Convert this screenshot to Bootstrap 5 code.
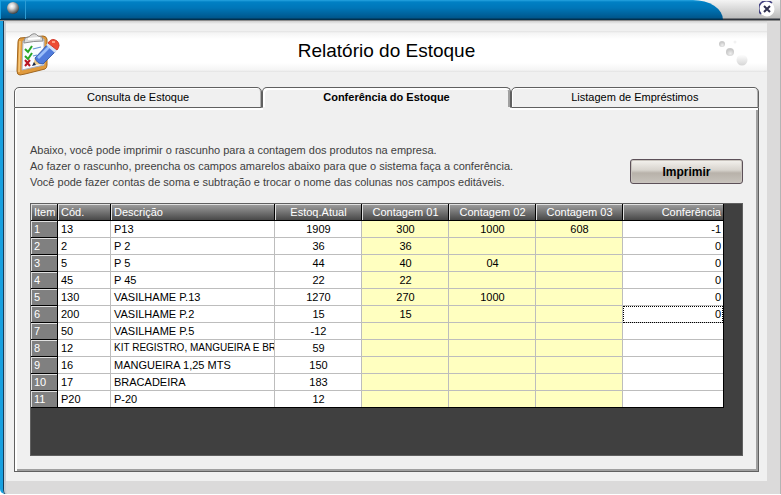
<!DOCTYPE html>
<html lang="pt-BR">
<head>
<meta charset="utf-8">
<meta name="viewport" content="width=device-width, initial-scale=1">
<title>Relatório do Estoque</title>
<link href="https://cdn.jsdelivr.net/npm/bootstrap@5.3.0/dist/css/bootstrap.min.css" rel="stylesheet">
<style>
body{font-family:"Liberation Sans",Arial,sans-serif;font-size:11px;line-height:16px;color:#000;background:#fff}
.app-window{min-height:493px;background:#dbdada;border-left:3px solid #18a0e0;border-right:1px solid #b4b4b4;border-bottom-left-radius:5px;box-shadow:inset 1px 0 #143c58,inset 3px 0 #c8ccd2}
.title-bar{height:21px;margin-left:-3px;background:linear-gradient(#f4f4f4,#bcbcbc 18px,#30343c 19px,#30343c 20px,#8c8c8c 20px)}
.title-fill{height:20px;margin-right:57px;background:linear-gradient(#27a4e0,#0080c4 2px,#0076b8 8px,#00568c 18px,#02304e 19px);border-top-right-radius:30px 20px}
.orb-cell{width:26px;height:19px;border-right:1px solid #2c9cd4;border-left:1px solid #18a0e0}
.close-btn{width:16px;height:16px;right:5px;top:1px}
.work-area{margin:0 13px 13px 3px;padding-top:10px;background:linear-gradient(#cfcfcf,#f0f0f0 3px)}
.banner{height:41px;background:linear-gradient(#e2e2e2,#f4f4f4 2px,#fff 8px,#fff 32px,#f4f4f4 39px,#e2e2e2)}
.banner h1{font-size:19px;line-height:40px;font-weight:400}
.banner-icon{left:10px;top:2px;width:44px;height:44px}
.banner-dots{right:17px;top:8px;width:32px;height:28px}
.tab-zone{padding:15px 8px 9px}
.report-tabs{display:grid;grid-template-columns:1fr 1fr 1fr;--bs-nav-tabs-border-width:0px;padding:0}
.report-tabs .nav-link{font-size:11px;line-height:19px;padding:0;margin:0;color:#000;background:#f0f0f0;border:1px solid #606060;border-radius:5px 5px 0 0;box-shadow:inset 1px 1px #fff,inset -1px 0 #b0b0b0}
.report-tabs .nav-link.active{font-weight:700;color:#000;background:#f0f0f0;border-color:#606060;border-bottom-color:#f0f0f0;box-shadow:inset 2px 2px #fff,inset -2px 0 #a0a0a0}
.tab-page{min-height:362px;border:1px solid #606060;border-top:0;box-shadow:inset 2px 0 #fff,inset -2px -2px #a0a0a0;padding:32px 15px 15px;background:#f0f0f0}
.tab-rule{display:grid;grid-template-columns:1fr 1fr 1fr;border:solid #606060;border-width:0 1px;background:#f0f0f0}
.tab-rule span{height:2px;background:#fff}
.tab-rule span:nth-child(2){visibility:hidden}
.intro{color:#404040}
.print-btn{width:113px;height:25px;padding:0;margin-top:17px;font-size:12px;line-height:22px;font-weight:700;color:#000;border:1px solid #5c5058;border-radius:3px;background:linear-gradient(#f4f2ee,#d8d4ce 10px,#b8b2aa 13px,#c8c3bc);box-shadow:inset 0 0 0 1px #c9c4be}
.grid-box{margin-top:13px;min-height:253px;background:#404040;border:1px solid #606060;padding-right:18px}
.stock-grid{table-layout:fixed;width:100%;border-collapse:separate;border-spacing:0;border-right:1px solid #000;border-bottom:1px solid #000;margin:0}
.stock-grid th,.stock-grid td{height:17px;line-height:16px;padding:0 2px 0 3px;white-space:nowrap;overflow:hidden;background:#fff;border-right:1px solid #bdbdbd;border-bottom:1px solid #bdbdbd}
.stock-grid thead th{color:#fff;font-weight:400;background:linear-gradient(#a0a0a0,#484848);border-color:#000;box-shadow:inset 1px 1px #e0e0e0}
.stock-grid tbody th{color:#fff;font-weight:400;background:#808080;border-color:#000;box-shadow:inset 1px 1px #e0e0e0}
.stock-grid td.count{background:#ffffc0}
.stock-grid td.long-name{font-size:10px;padding-right:0}
.stock-grid tr>:last-child{border-right:0}
.stock-grid tbody tr:last-child>*{border-bottom:0;height:16px}
.stock-grid td.focus-cell{outline:1px dotted #000;outline-offset:-1px}
.c-item{width:27px}.c-code{width:53px}.c-num{width:87px}.c-conf{width:100px}
</style>
<script src="https://cdn.jsdelivr.net/npm/bootstrap@5.3.0/dist/js/bootstrap.bundle.min.js"></script>
</head>
<body>
<div class="app-window d-flex flex-column">
  <header class="title-bar position-relative">
    <div class="title-fill">
      <div class="orb-cell d-flex">
        <svg width="24" height="18" viewBox="0 0 24 18" aria-hidden="true"><defs><radialGradient id="orb" cx=".4" cy=".35" r=".65"><stop offset="0" stop-color="#fff"/><stop offset=".35" stop-color="#d8d8d8"/><stop offset="1" stop-color="#444"/></radialGradient></defs><circle cx="12" cy="8" r="6" fill="url(#orb)"/></svg>
      </div>
    </div>
    <button type="button" class="close-btn btn p-0 border-0 position-absolute d-flex" aria-label="Fechar">
      <svg width="16" height="16" viewBox="0 0 16 16"><circle cx="8" cy="8" r="7.5" fill="#fff"/><path d="M2 13A7 7 0 0 1 13 2" fill="none" stroke="#414080" stroke-width="1.6"/><path d="M5 5l6 6M11 5l-6 6" stroke="#303050" stroke-width="2"/></svg>
    </button>
  </header>

  <main class="work-area flex-grow-1">
    <div class="banner position-relative">
      <svg class="banner-icon position-absolute" viewBox="0 0 44 44" aria-hidden="true">
        <path d="M4 5Q2 6 2 9L1 38Q1 42 4 42L9 41L29 36Q31 35 31 32L31 6Q30 3 27 3Z" fill="#e09a3c" stroke="#a0661f"/>
        <path d="M4 8L3 39" stroke="#f8c97c" stroke-width="1.6"/>
        <path d="M7 8L28 6L28 32L6 37Z" fill="#fafcff" stroke="#a7b3c8"/>
        <path d="M8 9L9 5Q14 4 15 2Q19-1 22 3L26 4L27 8Q18 8 8 10Z" fill="#ddd" stroke="#8c8c8c"/>
        <path d="M12 6L24 5" stroke="#fff" stroke-width="2"/>
        <path d="M9 16l3 3 4-6M9 23l3 3 4-6" fill="none" stroke="#28a526" stroke-width="2"/>
        <path d="M9 27l5 6M14 27l-5 6" stroke="#b81724" stroke-width="2"/>
        <path d="M17 16L25 14M17 23l4-1" stroke="#6295d7" stroke-width="1.2"/>
        <path d="M19 25L17 32L27 31Z" fill="#edcb8b"/><path d="M18 29l-2 4 4-1z" fill="#172747"/>
        <path d="M19 25L32 11L40 18L27 31Q21 31 19 25Z" fill="#4f7bdc" stroke="#294f9e" stroke-width=".8"/>
        <path d="M22 25L33 14" stroke="#99bdf9" stroke-width="2.6"/>
        <path d="M30 12l2-2 9 7-2 3z" fill="#d3e2f7"/>
        <path d="M32 10Q36 4 41 8Q45 12 41 17Z" fill="#ee4c35" stroke="#d23a2c"/><path d="M36 9l3 0" stroke="#ff9e84" stroke-width="2"/>
      </svg>
      <h1 class="text-center m-0">Relatório do Estoque</h1>
      <svg class="banner-dots position-absolute" viewBox="0 0 32 28" aria-hidden="true">
        <defs><radialGradient id="dot" cx=".55" cy=".7"><stop offset="0" stop-color="#eee"/><stop offset="1" stop-color="#cacaca"/></radialGradient><linearGradient id="ball" x2="0" y2="1"><stop offset="0" stop-color="#fff"/><stop offset="1" stop-color="#d6d6d6"/></linearGradient></defs>
        <circle cx="4" cy="5" r="3" fill="url(#dot)"/><circle cx="17" cy="3" r="1.5" fill="#f2f2f2"/><circle cx="12" cy="13" r="4" fill="url(#dot)"/><circle cx="24" cy="21" r="5.5" fill="url(#ball)"/>
      </svg>
    </div>

    <div class="tab-zone">
      <div class="nav nav-tabs report-tabs" role="tablist">
        <button type="button" class="nav-link" role="tab" aria-selected="false">Consulta de Estoque</button>
        <button type="button" class="nav-link active" role="tab" aria-selected="true" aria-controls="conferencia" id="tab-conferencia">Conferência do Estoque</button>
        <button type="button" class="nav-link" role="tab" aria-selected="false">Listagem de Empréstimos</button>
      </div>
      <div class="tab-rule" aria-hidden="true"><span></span><span></span><span></span></div>
      <section class="tab-page" id="conferencia" role="tabpanel" aria-labelledby="tab-conferencia">
        <div class="d-flex justify-content-between align-items-start">
          <p class="intro m-0">Abaixo, você pode imprimir o rascunho para a contagem dos produtos na empresa.<br>Ao fazer o rascunho, preencha os campos amarelos abaixo para que o sistema faça a conferência.<br>Você pode fazer contas de soma e subtração e trocar o nome das colunas nos campos editáveis.</p>
          <button type="button" class="btn print-btn flex-shrink-0">Imprimir</button>
        </div>
        <div class="grid-box">
          <table class="stock-grid">
            <colgroup><col class="c-item"><col class="c-code"><col><col class="c-num"><col class="c-num"><col class="c-num"><col class="c-num"><col class="c-conf"></colgroup>
            <thead><tr><th scope="col">Item</th><th scope="col">Cód.</th><th scope="col">Descrição</th><th scope="col" class="text-center">Estoq.Atual</th><th scope="col" class="text-center">Contagem 01</th><th scope="col" class="text-center">Contagem 02</th><th scope="col" class="text-center">Contagem 03</th><th scope="col" class="text-end">Conferência</th></tr></thead>
            <tbody>
              <tr><th scope="row">1</th><td>13</td><td>P13</td><td class="text-center">1909</td><td class="count text-center">300</td><td class="count text-center">1000</td><td class="count text-center">608</td><td class="text-end">-1</td></tr>
              <tr><th scope="row">2</th><td>2</td><td>P 2</td><td class="text-center">36</td><td class="count text-center">36</td><td class="count"></td><td class="count"></td><td class="text-end">0</td></tr>
              <tr><th scope="row">3</th><td>5</td><td>P 5</td><td class="text-center">44</td><td class="count text-center">40</td><td class="count text-center">04</td><td class="count"></td><td class="text-end">0</td></tr>
              <tr><th scope="row">4</th><td>45</td><td>P 45</td><td class="text-center">22</td><td class="count text-center">22</td><td class="count"></td><td class="count"></td><td class="text-end">0</td></tr>
              <tr><th scope="row">5</th><td>130</td><td>VASILHAME P.13</td><td class="text-center">1270</td><td class="count text-center">270</td><td class="count text-center">1000</td><td class="count"></td><td class="text-end">0</td></tr>
              <tr><th scope="row">6</th><td>200</td><td>VASILHAME P.2</td><td class="text-center">15</td><td class="count text-center">15</td><td class="count"></td><td class="count"></td><td class="text-end focus-cell">0</td></tr>
              <tr><th scope="row">7</th><td>50</td><td>VASILHAME P.5</td><td class="text-center">-12</td><td class="count"></td><td class="count"></td><td class="count"></td><td></td></tr>
              <tr><th scope="row">8</th><td>12</td><td class="long-name">KIT REGISTRO, MANGUEIRA E BR</td><td class="text-center">59</td><td class="count"></td><td class="count"></td><td class="count"></td><td></td></tr>
              <tr><th scope="row">9</th><td>16</td><td>MANGUEIRA 1,25 MTS</td><td class="text-center">150</td><td class="count"></td><td class="count"></td><td class="count"></td><td></td></tr>
              <tr><th scope="row">10</th><td>17</td><td>BRACADEIRA</td><td class="text-center">183</td><td class="count"></td><td class="count"></td><td class="count"></td><td></td></tr>
              <tr><th scope="row">11</th><td>P20</td><td>P-20</td><td class="text-center">12</td><td class="count"></td><td class="count"></td><td class="count"></td><td></td></tr>
            </tbody>
          </table>
        </div>
      </section>
    </div>
  </main>
</div>
</body>
</html>
